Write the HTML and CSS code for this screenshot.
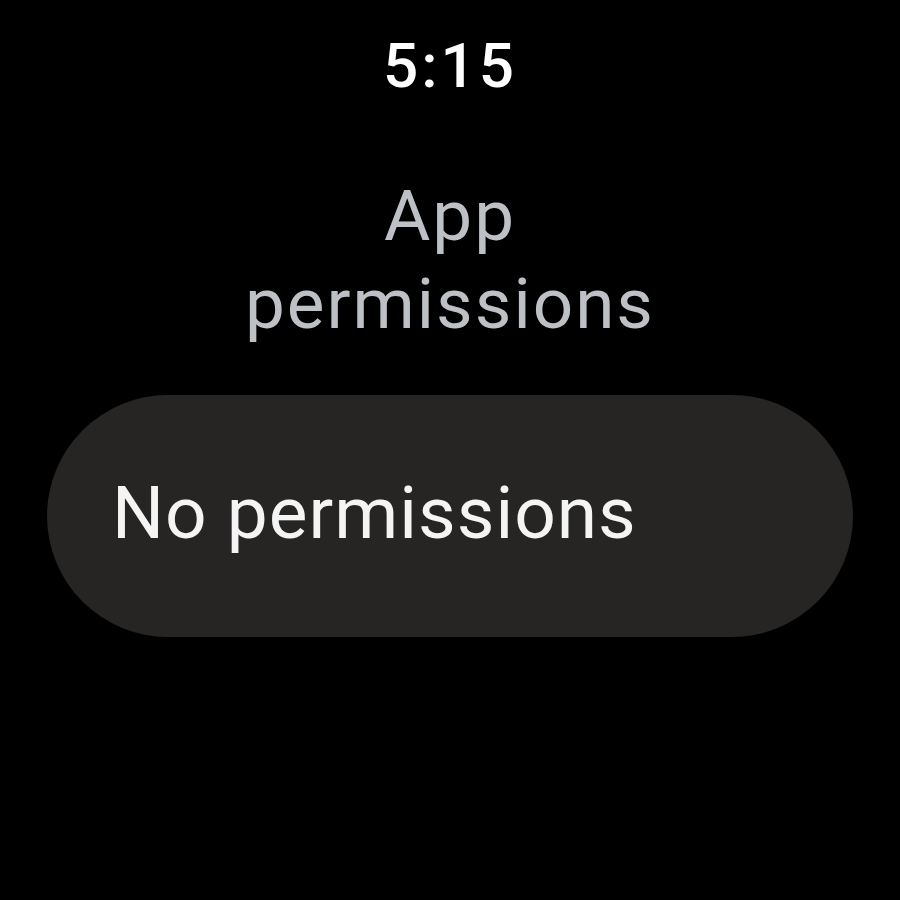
FILE: index.html
```html
<!DOCTYPE html>
<html lang="en">
<head>
    <meta charset="UTF-8">
    <meta name="viewport" content="width=device-width, initial-scale=1.0">
    <title>App permissions</title>
    <link rel="stylesheet" href="styles.css">
</head>
<body>
    <div class="screen">
        <div class="time">5:15</div>

        <h1 class="title">App<br>permissions</h1>

        <div class="chip">
            <span class="chip-label">No permissions</span>
        </div>
    </div>
</body>
</html>
```

FILE: styles.css
```css
* {
    margin: 0;
    padding: 0;
    box-sizing: border-box;
}

body {
    font-family: Roboto, "Noto Sans", sans-serif;
    background: #000;
    width: 900px;
    height: 900px;
    overflow: hidden;
}

.screen {
    display: flex;
    flex-direction: column;
    align-items: center;
    padding: 0 47px;
}

.time {
    color: #fff;
    font-size: 62px;
    font-weight: 500;
    letter-spacing: 3px;
    line-height: 1;
    margin-top: 35px;
}

.title {
    color: #bdc1c6;
    font-size: 71px;
    font-weight: 400;
    letter-spacing: 2px;
    line-height: 88px;
    text-align: center;
    margin-top: 75px;
}

.chip {
    width: 100%;
    height: 242px;
    margin-top: 47px;
    background: #262524;
    border-radius: 121px;
    display: flex;
    align-items: center;
    padding-left: 65px;
    padding-bottom: 6px;
}

.chip-label {
    color: #f4f4f4;
    font-size: 73px;
    font-weight: 400;
    letter-spacing: 1px;
}
```
